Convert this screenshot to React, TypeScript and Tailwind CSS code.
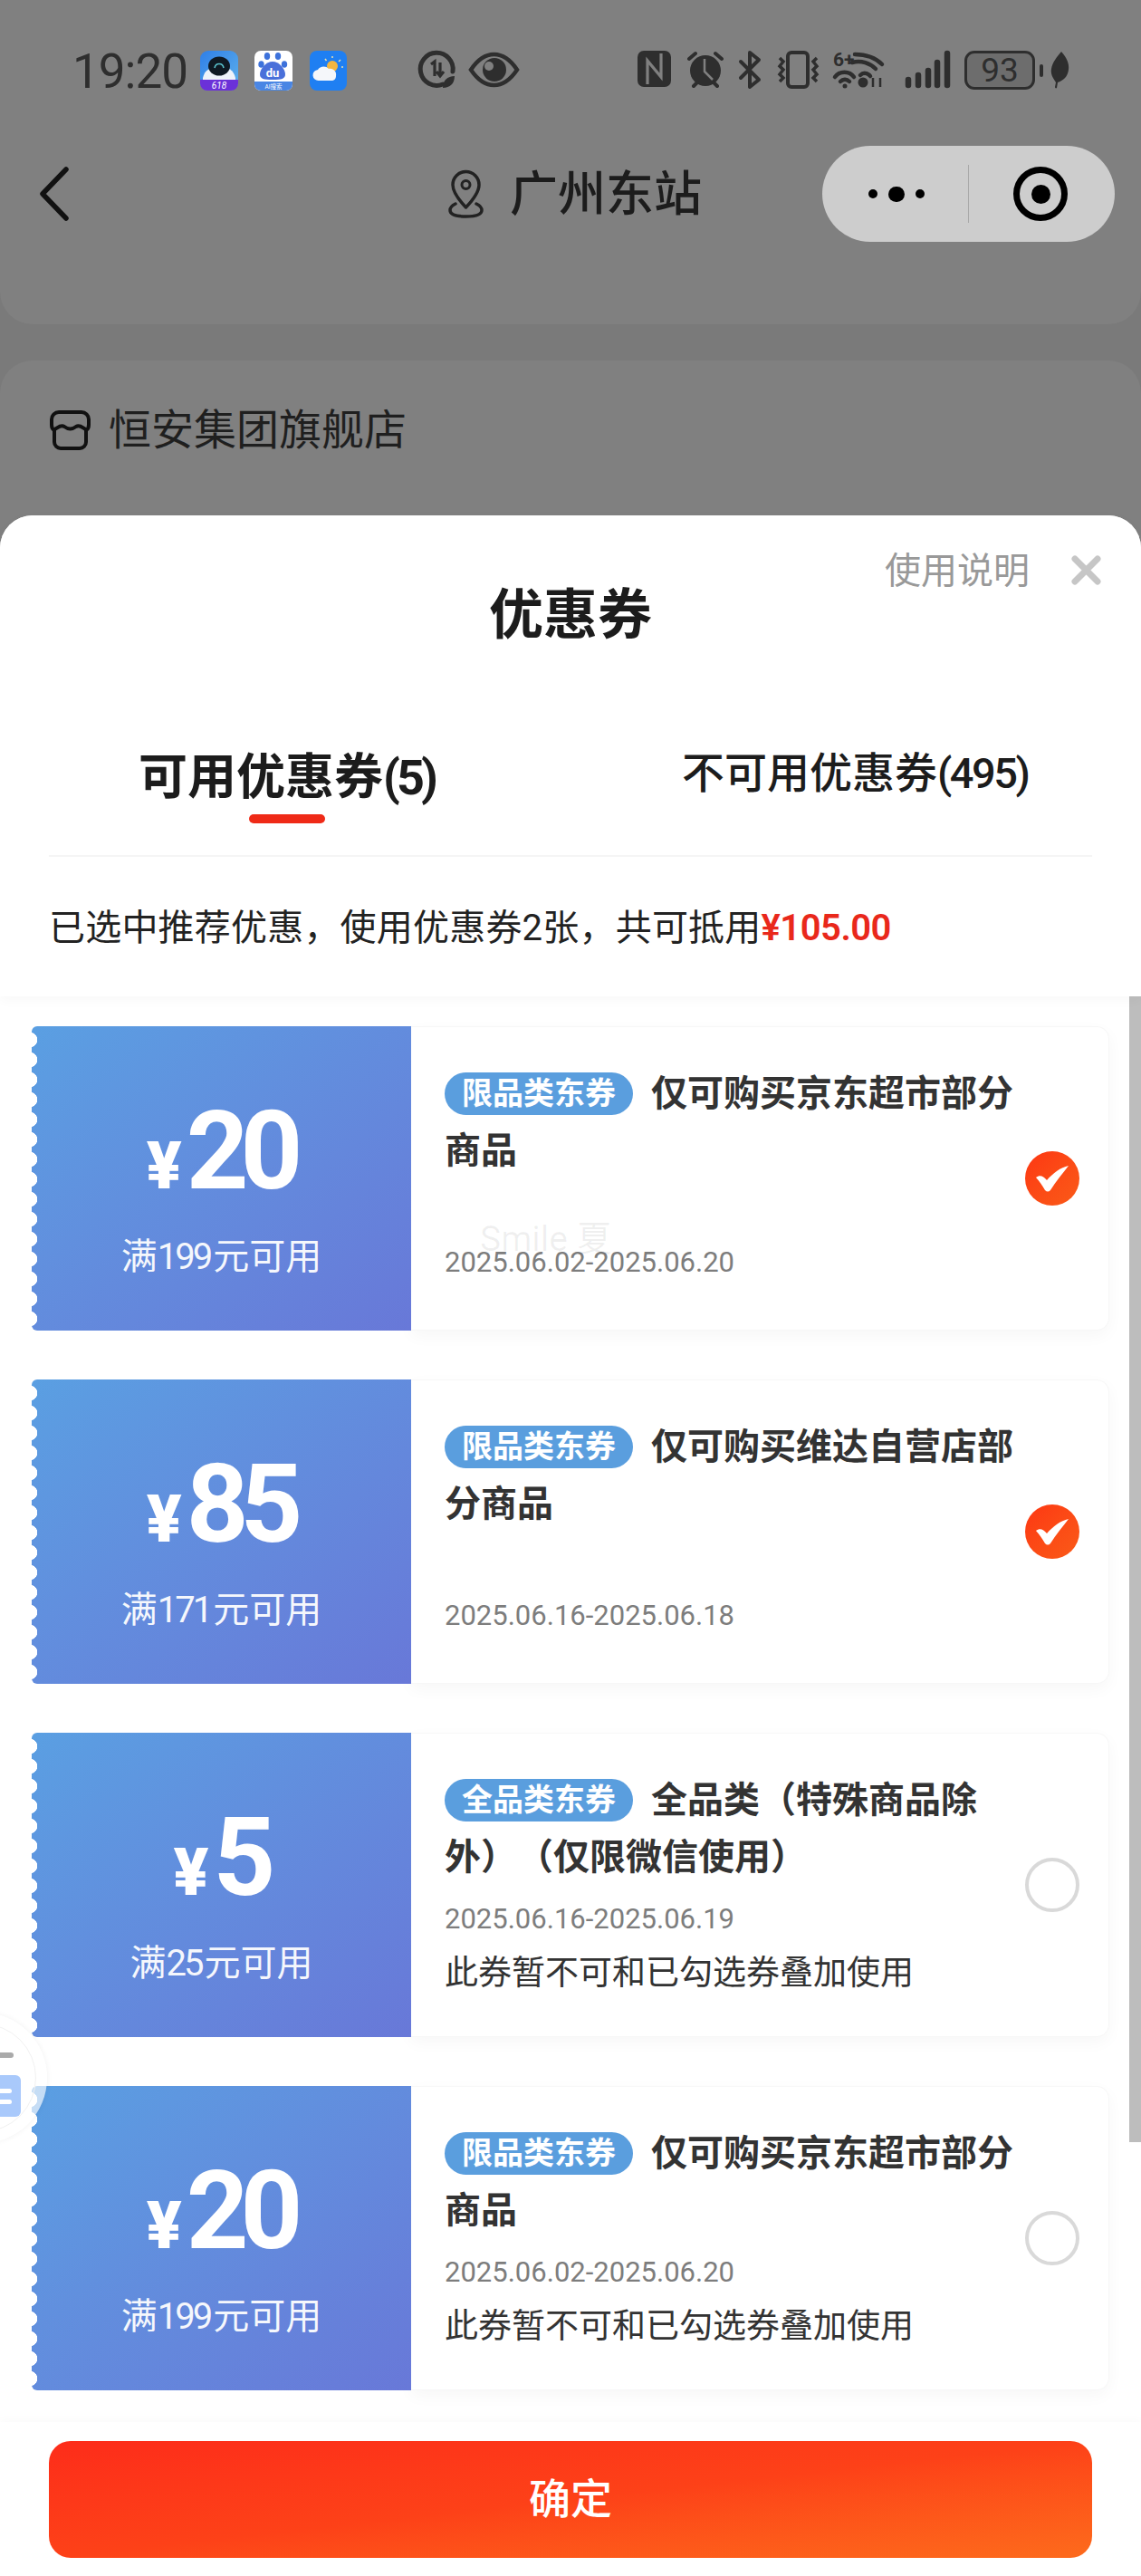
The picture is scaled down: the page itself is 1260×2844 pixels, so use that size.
import React from "react";

interface Coupon {
  amount: string;
  limit: string;
  tag: string;
  title: string;
  date: string;
  note?: string;
  checked?: boolean;
}

const coupons: Coupon[] = [
  { amount: "20", limit: "199", tag: "限品类东券", title: "仅可购买京东超市部分商品", date: "2025.06.02-2025.06.20", checked: true },
  { amount: "85", limit: "171", tag: "限品类东券", title: "仅可购买维达自营店部分商品", date: "2025.06.16-2025.06.18", checked: true },
  { amount: "5", limit: "25", tag: "全品类东券", title: "全品类（特殊商品除外）（仅限微信使用）", date: "2025.06.16-2025.06.19", note: "此券暂不可和已勾选券叠加使用" },
  { amount: "20", limit: "199", tag: "限品类东券", title: "仅可购买京东超市部分商品", date: "2025.06.02-2025.06.20", note: "此券暂不可和已勾选券叠加使用" },
];

const InkIcon = ({ w, h, ml, children }: { w: number; h: number; ml: string; children: React.ReactNode }) => (
  <svg width={w} height={h} viewBox={`0 0 ${w} ${h}`} className={`shrink-0 overflow-visible ${ml}`} fill="none">
    {children}
  </svg>
);

const StatusBar = () => (
  <div className="flex h-[161px] items-start pt-[56px] text-[#2e2e2e]">
    <span className="ml-[80px] mt-[1px] w-[126px] shrink-0 whitespace-nowrap text-[53px] leading-[44px] tracking-[-1px]">19:20</span>
    {/* app notifications */}
    <InkIcon w={42} h={44} ml="ml-[15px]">
      <defs>
        <linearGradient id="a1" x1="0" y1="0" x2="1" y2="1">
          <stop offset="0" stopColor="#2f7fe8" />
          <stop offset="1" stopColor="#5fb2ea" />
        </linearGradient>
      </defs>
      <rect width="42" height="44" rx="9" fill="url(#a1)" />
      <path d="M3 30c2-9 8-12 18-12s16 3 18 12v4H3z" fill="#eef3fa" />
      <ellipse cx="21" cy="17" rx="12" ry="10.5" fill="#0f1a24" />
      <path d="M16 19c1-6 9-6 10 0" stroke="#58bfc9" strokeWidth="1.6" />
      <path d="M0 32h42v4a8 8 0 0 1-8 8H8a8 8 0 0 1-8-8z" fill="#6b31d8" />
      <text x="21" y="42" textAnchor="middle" fontSize="10" fontStyle="italic" fill="#fff">618</text>
    </InkIcon>
    <InkIcon w={42} h={44} ml="ml-[18px]">
      <rect width="42" height="44" rx="7" fill="#fff" />
      <path d="M0 34h42v3a7 7 0 0 1-7 7H7a7 7 0 0 1-7-7z" fill="#4a86e4" />
      <ellipse cx="14" cy="6" rx="3.2" ry="4" fill="#3d72db" />
      <ellipse cx="26" cy="6" rx="3.2" ry="4" fill="#3d72db" />
      <ellipse cx="7.5" cy="15" rx="3.2" ry="3.8" fill="#3d72db" />
      <ellipse cx="33" cy="15" rx="3.2" ry="3.8" fill="#3d72db" />
      <path d="M20 12c7 0 14 8 14 14 0 5-4 6-14 6s-14-1-14-6c0-6 7-14 14-14z" fill="#4a70da" />
      <text x="20" y="29" textAnchor="middle" fontSize="13" fontWeight="700" fill="#fff">du</text>
      <text x="21" y="42" textAnchor="middle" fontSize="6.5" fill="#fff">AI搜索</text>
    </InkIcon>
    <InkIcon w={41} h={44} ml="ml-[19px]">
      <rect width="41" height="44" rx="8" fill="#1f7ff2" />
      <circle cx="25" cy="17" r="6" fill="#f3b63f" />
      <path d="M25 6v2M34 10l-2 2M17 9l1.5 2M37 18h-2" stroke="#e9e2b0" strokeWidth="1.5" />
      <path d="M10 33a6 6 0 0 1-1-12c2-4 9-5 12-1 5-1 9 3 8 8 0 3-2 5-5 5z" fill="#f5f7fa" />
    </InkIcon>
    {/* data saver */}
    <InkIcon w={42} h={42} ml="ml-[78px]">
      <path d="M28 37a18 18 0 1 1 11-14" stroke="#2e2e2e" strokeWidth="5" strokeLinecap="round" />
      <path d="M15 15l4-3v16M25 13v15m-4-5 4 5 4-5" stroke="#2e2e2e" strokeWidth="3.2" />
      <path d="M28 41c0-8 5-13 13-13 0 8-5 13-13 13z" fill="#2e2e2e" />
    </InkIcon>
    <InkIcon w={55} h={42} ml="ml-[15px]">
      <path d="M2 21C10 9 18 4 27.500 4S45 9 53 21c-8 12-16 17-25.500 17S10 33 2 21z" stroke="#2e2e2e" strokeWidth="4.500" />
      <circle cx="28" cy="21" r="13" fill="#2e2e2e" />
      <circle cx="22" cy="17" r="5" fill="#808080" />
    </InkIcon>
    <InkIcon w={37} h={40} ml="ml-[131px]">
      <rect width="37" height="40" rx="7" fill="#2e2e2e" />
      <path d="M11 37V11l15 18V3" stroke="#808080" strokeWidth="3.200" />
    </InkIcon>
    <InkIcon w={42} h={42} ml="ml-[17px]">
      <circle cx="21" cy="22" r="17" fill="#2e2e2e" />
      <path d="M3 9l7-6M39 9l-7-6M8 39l4-4M34 39l-4-4" stroke="#2e2e2e" strokeWidth="4" strokeLinecap="round" />
      <path d="M20 9v14l9 9" stroke="#808080" strokeWidth="2.500" />
    </InkIcon>
    <InkIcon w={26} h={42} ml="ml-[16px]">
      <path d="M2 12l20 20-10 8V2l10 8L2 30" stroke="#2e2e2e" strokeWidth="4" strokeLinecap="round" strokeLinejoin="round" />
    </InkIcon>
    <InkIcon w={49} h={42} ml="ml-[15px]">
      <rect x="13" y="2" width="22" height="38" rx="4" stroke="#2e2e2e" strokeWidth="4" />
      <path d="M4 8l4 4-4 5 4 4-4 5 4 4-4 4M45 8l-4 4 4 5-4 4 4 5-4 4 4 4" stroke="#2e2e2e" strokeWidth="3.500" />
    </InkIcon>
    <InkIcon w={57} h={42} ml="ml-[14px]">
      <text x="0" y="17" fontSize="21" fontWeight="700" fill="#2e2e2e">6+</text>
      <path d="M24 4c12 0 22 3 30 11M21 13c10-3 20 1 26 7M2 29c5-7 16-7 21 0M30 27c3-3 8-3 11 1M8 34c3-3 7-3 10 0" stroke="#2e2e2e" strokeWidth="4.500" strokeLinecap="round" />
      <circle cx="13" cy="39" r="2.500" fill="#2e2e2e" />
      <circle cx="33" cy="35" r="5.500" fill="#2e2e2e" />
      <path d="M44 30v10M52 30v10" stroke="#2e2e2e" strokeWidth="2.500" />
    </InkIcon>
    <InkIcon w={51} h={42} ml="ml-[22px]">
      <path d="M4 32v6M15 27v11M26 22v16M36 13v25M47 3v35" stroke="#2e2e2e" strokeWidth="6.500" strokeLinecap="round" />
    </InkIcon>
    <div className="ml-[15px] flex h-[43px] w-[78px] shrink-0 items-center justify-center rounded-[11px] border-[3.500px] border-[#2e2e2e] bg-[#6d6d6d] text-[37px] leading-none">93</div>
    <div className="ml-[5px] mt-[15px] h-[14px] w-[4px] shrink-0 rounded-full bg-[#2e2e2e]" />
    <InkIcon w={21} h={42} ml="ml-[8px]">
      <path d="M12 1c6 7 9 13 8 20-1 8-6 12-12 14l-1 6c-1 1-2 0-2-1l1-5C2 29 0 25 1 20 2 13 7 7 12 1z" fill="#2e2e2e" />
    </InkIcon>
  </div>
);

const NavBar = () => (
  <div className="flex h-[106px] items-center text-[#1c1c1c]">
    <svg width="32" height="60" viewBox="0 0 32 60" fill="none" className="ml-[44px] shrink-0">
      <path d="M29 3 3 30l26 27" stroke="#111" strokeWidth="5.500" strokeLinecap="round" strokeLinejoin="round" />
    </svg>
    <svg width="41" height="54" viewBox="0 0 41 54" fill="none" className="ml-[418px] shrink-0">
      <path d="M20.500 42C12 33 6 25 6 17a14.500 14.500 0 0 1 29 0c0 8-6 16-14.500 25z" stroke="#222" strokeWidth="3.500" strokeLinejoin="round" />
      <circle cx="20.500" cy="17" r="4.500" stroke="#222" strokeWidth="3" />
      <path d="M9 38c-4 2-6 4-6 7 0 4 5 7 17.500 7S38 49 38 45c0-3-2-5-6-7" stroke="#222" strokeWidth="3.500" strokeLinecap="round" />
    </svg>
    <span className="ml-[28px] mt-[3px] w-[210px] shrink-0 whitespace-nowrap text-[53px] font-medium leading-none">广州东站</span>
    <div className="ml-[135px] flex h-[106px] w-[323px] shrink-0 items-center rounded-full bg-[#cdcdcd]">
      <div className="flex w-[161px] items-center justify-center gap-[12px] pl-[3px]">
        <span className="h-[10px] w-[10px] rounded-full bg-black" />
        <span className="h-[17px] w-[18px] rounded-full bg-black" />
        <span className="h-[10px] w-[10px] rounded-full bg-black" />
      </div>
      <div className="h-[64px] w-px bg-[#a9a9a9]" />
      <div className="flex flex-1 items-center justify-center pr-[3px]">
        <div className="flex h-[60px] w-[60px] items-center justify-center rounded-full border-[7px] border-black">
          <div className="h-[21px] w-[21px] rounded-full bg-black" />
        </div>
      </div>
    </div>
  </div>
);

const Radio = ({ checked }: { checked?: boolean }) =>
  checked ? (
    <div className="flex h-[60px] w-[60px] items-center justify-center rounded-full bg-gradient-to-br from-[#fd3613] to-[#fa5a18]">
      <svg width="38" height="30" viewBox="0 0 38 30">
        <path d="M1 14c4-3 8-2 12 3C20 9 28 3 37 1 31 9 23 18 17 28c-2 2-4 2-6 0C8 23 5 18 1 14z" fill="#fff" />
      </svg>
    </div>
  ) : (
    <div className="h-[60px] w-[60px] rounded-full border-[4px] border-[#d9d9d9]" />
  );

const CouponCard = ({ coupon }: { coupon: Coupon }) => (
  <div className="flex h-[336px]">
    <div className="relative flex w-[419px] shrink-0 flex-col items-center overflow-hidden rounded-l-[6px] bg-gradient-to-br from-[#5a9fe2] to-[#6878d8] pt-[88px] text-white">
      <div className="absolute inset-y-0 left-0 w-[8px] bg-[radial-gradient(circle_at_-2px_50%,#ffffff_8px,transparent_8.500px)] bg-[length:8px_22px] bg-[position:0_4px]" />
      <div className="flex h-[100px] items-baseline pr-[2px] leading-[100px]">
        <span className="text-[72px] font-black">¥</span>
        <span className="ml-[5px] text-[120px] font-bold tracking-[-9px]">{coupon.amount}</span>
      </div>
      <div className="mt-[43px] h-[48px] text-[40px] leading-[48px] text-white/95">
        满<span className="tracking-[-3px]">{coupon.limit}</span>
        <span className="ml-[3px]">元可用</span>
      </div>
    </div>
    <div className="flex flex-1 items-center rounded-r-[14px] border border-l-0 border-[#f7f7f7] bg-white pl-[37px] pr-[32px] shadow-[0_6px_18px_rgba(0,0,0,0.035)]">
      <div className={`flex h-full w-[631px] shrink-0 flex-col pt-[42px] ${coupon.note ? "pb-[52px]" : "pb-[54px]"}`}>
        <div className="w-[648px] text-[40px] font-bold leading-[63px] text-[#333] [text-spacing-trim:space-all]">
          <span className="mr-[20px] inline-block h-[47px] w-[208px] rounded-full bg-[#5a9ede] text-center align-[2px] text-[34px] font-bold leading-[47px] text-white">{coupon.tag}</span>
          {coupon.title}
        </div>
        <div className="mt-auto text-[31px] leading-[40px] text-[#7d7d7d]">{coupon.date}</div>
        {coupon.note && <div className="mt-[23px] h-[34px] text-[37px] leading-[34px] text-[#333]">{coupon.note}</div>}
      </div>
      <div className="ml-auto shrink-0">
        <Radio checked={coupon.checked} />
      </div>
    </div>
  </div>
);

const Sheet = () => (
  <div className="absolute inset-x-0 bottom-0 top-[569px] flex flex-col rounded-t-[36px] bg-white">
    <div className="relative z-10 rounded-t-[36px] bg-white pb-[45px] shadow-[0_4px_14px_rgba(0,0,0,0.03)]">
      <div className="flex h-[83px] items-center justify-end gap-[46px] pr-[44px] pt-[41px]">
        <span className="text-[40px] leading-[48px] text-[#999]">使用说明</span>
        <svg width="33" height="33" viewBox="0 0 33 33" className="-mt-[3px]">
          <path d="M4 4l25 25M29 4 4 29" stroke="#c6c6c6" strokeWidth="7" strokeLinecap="round" />
        </svg>
      </div>
      <div className="-mt-[7px] h-[70px] text-center text-[60px] font-bold leading-[70px] text-[#1c1c1c]">优惠券</div>
      <div className="mt-[108px] flex items-start">
        <div className="ml-[153px] flex w-[327px] flex-col items-center">
          <span className="whitespace-nowrap text-[54px] font-bold leading-[72px] text-[#1c1c1c]">
            可用优惠券<span className="tracking-[-4px]">(5)</span>
          </span>
          <span className="mt-[4px] h-[10px] w-[84px] rounded-full bg-[#ef2a17]" />
        </div>
        <span className="-mt-[5px] ml-[273px] whitespace-nowrap text-[47px] font-medium leading-[72px] text-[#1c1c1c]">
          不可用优惠券<span className="tracking-[-2.500px]">(495)</span>
        </span>
      </div>
      <div className="mx-[54px] mt-[35px] h-[2px] bg-[#f5f5f5]" />
      <div className="ml-[54px] mt-[49px] h-[60px] text-[40px] leading-[60px] tracking-[0.2px] text-[#222]">
        已选中推荐优惠，使用优惠券2张，共可抵用<span className="font-semibold tracking-[-0.500px] text-[#e9281b]">¥105.00</span>
      </div>
    </div>
    <div className="relative flex h-[1574px] flex-col gap-[54px] overflow-hidden pl-[35px] pr-[35px] pt-[33px]">
      {coupons.map((c, i) => (
        <CouponCard key={i} coupon={c} />
      ))}
      <div className="absolute right-0 top-0 h-[1265px] w-[13px] bg-[#bdbdbd]" />
    </div>
    <div className="flex-1 bg-white px-[54px] pt-[21px] shadow-[0_-3px_10px_rgba(0,0,0,0.02)]">
      <div className="flex h-[129px] items-center justify-center rounded-[24px] bg-gradient-to-br from-[#fd2c1a] via-[#fd4118] to-[#fd6a1c] text-[46px] font-medium text-white">确定</div>
    </div>
  </div>
);

const App = () => {
  return (
    <div className="relative h-[2844px] w-[1260px] overflow-hidden bg-[#7a7a7a] font-['Roboto','Noto_Sans_CJK_SC',sans-serif]">
      <div className="h-[358px] rounded-b-[36px] bg-[#808080]">
        <StatusBar />
        <NavBar />
      </div>
      <div className="mt-[40px] flex h-[400px] items-start gap-[20px] rounded-t-[36px] bg-[#808080] pl-[55px] pt-[55px]">
        <svg width="45" height="44" viewBox="0 0 45 44" fill="none">
          <path d="M10 2h25a8 8 0 0 1 8 8v6c0 3-1 5-3 6v13a7 7 0 0 1-7 7H12a7 7 0 0 1-7-7V22c-2-1-3-3-3-6v-6a8 8 0 0 1 8-8z" stroke="#111" strokeWidth="4" strokeLinejoin="round" />
          <path d="M3 22c5-1 8-7 13-4 4 3 9 3 13 0 5-3 8 3 13 4" stroke="#111" strokeWidth="4" />
        </svg>
        <span className="whitespace-nowrap text-[47px] leading-[44px] text-[#1f1f1f]">恒安集团旗舰店</span>
      </div>

      <Sheet />

      {/* screenshot watermark */}
      <span className="absolute left-[530px] top-[1346px] text-[39px] leading-[44px] text-black/[0.06]">Smile 夏</span>

      {/* floating side widget */}
      <div className="absolute left-[-92px] top-[2222px] h-[144px] w-[144px] rounded-full bg-white/65 shadow-[0_0_6px_rgba(0,0,0,0.06)]">
        <div className="absolute inset-[12px] rounded-full border border-[#f1f1f1]" />
        <div className="absolute left-[60px] top-[44px] h-[6px] w-[47px] rounded-full bg-[#aaa]" />
        <div className="absolute left-[62px] top-[69px] flex h-[46px] w-[53px] flex-col items-end justify-center gap-[7px] rounded-[6px] bg-[#a9c9fb] pr-[10px]">
          <div className="h-[5px] w-[20px] rounded-full bg-white" />
          <div className="h-[5px] w-[20px] rounded-full bg-white" />
        </div>
      </div>
    </div>
  );
};

export default App;
